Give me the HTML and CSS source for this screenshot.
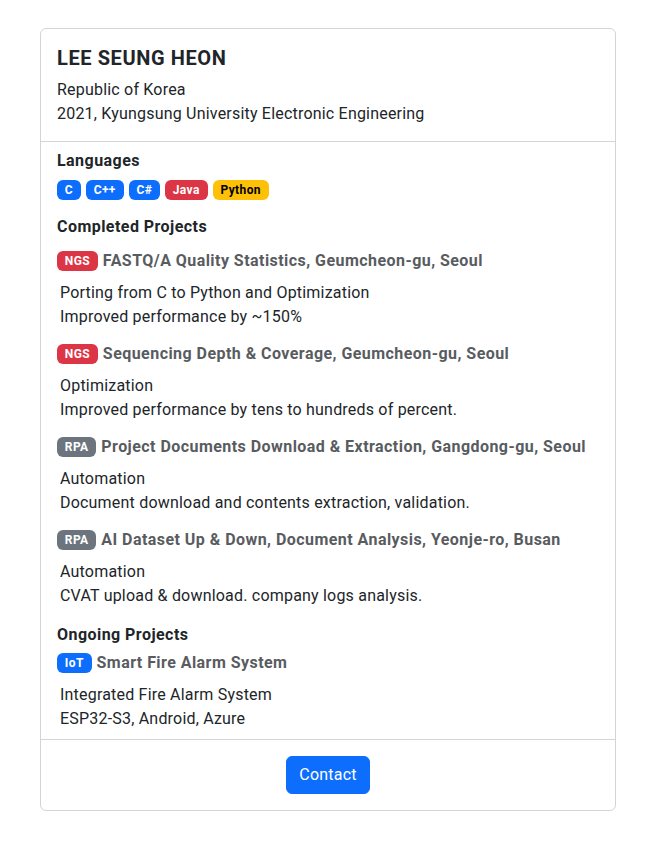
FILE: index.html
```html
<!DOCTYPE html>
<html lang="en">
<head>
<meta charset="utf-8">
<title>LEE SEUNG HEON</title>
<link rel="stylesheet" href="styles.css">
</head>
<body>
<div class="card">
  <div class="card-head">
    <h1 class="name">LEE SEUNG HEON</h1>
    <p class="info">Republic of Korea</p>
    <p class="info">2021, Kyungsung University Electronic Engineering</p>
  </div>
  <div class="card-main">
    <h2 class="section">Languages</h2>
    <div class="badges">
      <span class="badge primary">C</span>
      <span class="badge primary">C++</span>
      <span class="badge primary">C#</span>
      <span class="badge danger">Java</span>
      <span class="badge warning">Python</span>
    </div>

    <h2 class="section completed">Completed Projects</h2>
    <div class="project first">
      <div class="p-title"><span class="badge danger">NGS</span><span>FASTQ/A Quality Statistics, Geumcheon-gu, Seoul</span></div>
      <div class="p-desc">Porting from C to Python and Optimization<br>Improved performance by ~150%</div>
    </div>
    <div class="project">
      <div class="p-title"><span class="badge danger">NGS</span><span>Sequencing Depth &amp; Coverage, Geumcheon-gu, Seoul</span></div>
      <div class="p-desc">Optimization<br>Improved performance by tens to hundreds of percent.</div>
    </div>
    <div class="project">
      <div class="p-title"><span class="badge secondary">RPA</span><span>Project Documents Download &amp; Extraction, Gangdong-gu, Seoul</span></div>
      <div class="p-desc">Automation<br>Document download and contents extraction, validation.</div>
    </div>
    <div class="project">
      <div class="p-title"><span class="badge secondary">RPA</span><span>AI Dataset Up &amp; Down, Document Analysis, Yeonje-ro, Busan</span></div>
      <div class="p-desc">Automation<br>CVAT upload &amp; download. company logs analysis.</div>
    </div>

    <h2 class="section ongoing">Ongoing Projects</h2>
    <div class="project ongoing-first">
      <div class="p-title"><span class="badge primary">IoT</span><span>Smart Fire Alarm System</span></div>
      <div class="p-desc">Integrated Fire Alarm System<br>ESP32-S3, Android, Azure</div>
    </div>
  </div>
  <div class="card-foot">
    <button class="btn" type="button">Contact</button>
  </div>
</div>
</body>
</html>
```

FILE: styles.css
```css
* { box-sizing: border-box; }

html, body {
  margin: 0;
  padding: 0;
  background: #fff;
}

body {
  font-family: Roboto, "Noto Sans CJK KR", sans-serif;
  font-size: 16px;
  line-height: 24px;
  letter-spacing: 0.2px;
  color: #212529;
}

.card {
  width: 576px;
  margin: 28px 0 0 40px;
  border: 1px solid #d3d4d5;
  border-radius: 6px;
  background: #fff;
}

.card-head {
  padding: 17px 16px 15px;
  border-bottom: 1px solid #d3d4d5;
}

.name {
  margin: 0 0 8px;
  font-size: 20px;
  line-height: 24px;
  font-weight: 700;
  letter-spacing: 0.6px;
}

.info {
  margin: 0;
}

.card-main {
  padding: 9px 16px 8px;
}

.section {
  margin: 0;
  font-size: 16px;
  line-height: 20px;
  font-weight: 700;
  letter-spacing: 0.45px;
}

.section.completed { margin-top: 17px; }
.section.ongoing { margin-top: 17px; }

.badges {
  display: flex;
  gap: 5px;
  margin-top: 9px;
}

.badge {
  display: inline-block;
  padding: 4px 7.8px;
  font-size: 12px;
  line-height: 12px;
  font-weight: 700;
  letter-spacing: 0.4px;
  color: #fff;
  border-radius: 6px;
  white-space: nowrap;
}

.primary { background: #0d6efd; }
.danger { background: #dc3545; }
.warning { background: #ffc107; color: #000; }
.secondary { background: #6c757d; }

.project { margin-top: 13px; }
.project.first { margin-top: 12px; }
.project.ongoing-first { margin-top: 6px; }

.p-title {
  display: flex;
  align-items: center;
  gap: 5px;
  line-height: 24px;
  font-weight: 700;
  letter-spacing: 0.45px;
  color: #595c5f;
}

.p-desc {
  margin-top: 8px;
  padding-left: 3px;
}

.card-foot {
  padding: 16px;
  border-top: 1px solid #d3d4d5;
  display: flex;
  justify-content: center;
}

.btn {
  font-family: inherit;
  font-size: 16px;
  line-height: 24px;
  letter-spacing: 0.2px;
  padding: 6px 12px;
  color: #fff;
  background: #0d6efd;
  border: 1px solid #0d6efd;
  border-radius: 6px;
}
```
